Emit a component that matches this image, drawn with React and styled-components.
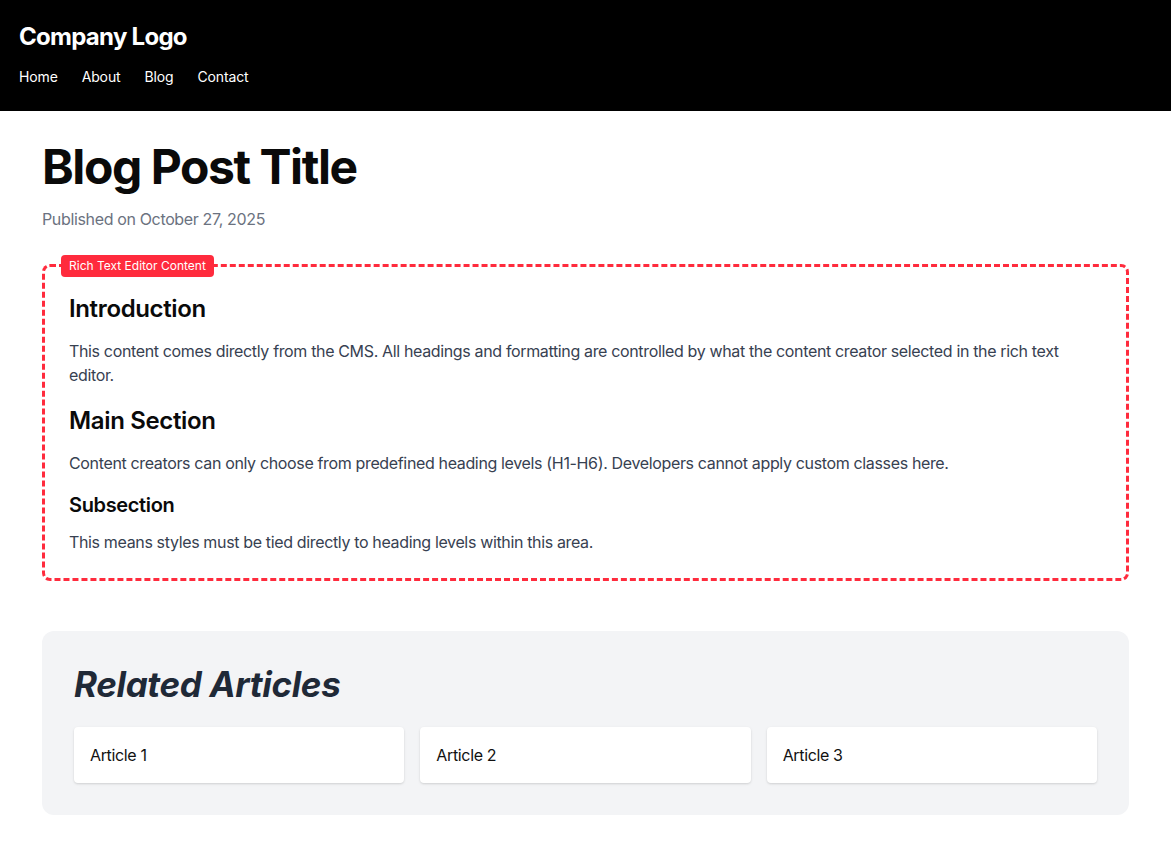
import styled, { createGlobalStyle } from 'styled-components';

const GlobalStyle = createGlobalStyle`
  * {
    box-sizing: border-box;
  }

  body {
    margin: 0;
    background: #fff;
    font-family: Inter, "Noto Sans", "Liberation Sans", sans-serif;
    letter-spacing: -0.022em;
    color: #111;
  }
`;

const accent = '#ff2b3d';

const Header = styled.header`
  background: #000;
  color: #fff;
  padding: 21px 19px 20px;
`;

const Logo = styled.div`
  font-size: 24px;
  line-height: 32px;
  font-weight: 700;
  letter-spacing: -0.03em;
  margin-bottom: 10px;
`;

const Nav = styled.nav`
  display: flex;
  gap: 24px;
`;

const NavLink = styled.a`
  color: #fff;
  font-size: 14px;
  line-height: 28px;
  letter-spacing: -0.01em;
  text-decoration: none;
`;

const Main = styled.main`
  padding: 27px 42px 40px;
`;

const Title = styled.h1`
  margin: 0;
  font-size: 48px;
  line-height: 58px;
  font-weight: 700;
  color: #0a0a0a;
  letter-spacing: -0.03em;
`;

const Meta = styled.p`
  margin: 11px 0 33px;
  font-size: 16px;
  line-height: 24px;
  color: #6b7280;
`;

const EditorBox = styled.section`
  position: relative;
  border: 3px dashed ${accent};
  border-radius: 8px;
  padding: 28px 24px 24px;
`;

const EditorLabel = styled.span`
  position: absolute;
  top: -12px;
  left: 16px;
  background: ${accent};
  color: #fff;
  font-size: 12px;
  line-height: 16px;
  letter-spacing: 0;
  padding: 3px 8px;
  border-radius: 4px;
`;

const Heading = styled.h2`
  margin: ${(p) => p.$top}px 0 ${(p) => p.$gap}px;
  font-size: ${(p) => p.$size}px;
  line-height: 1.2;
  font-weight: 600;
  color: #0a0a0a;
`;

const Paragraph = styled.p`
  margin: 0;
  font-size: 16px;
  line-height: 24px;
  color: #374151;
`;

const Related = styled.section`
  margin-top: 50px;
  background: #f3f4f6;
  border-radius: 12px;
  padding: 33px 32px 32px;
`;

const RelatedTitle = styled.h2`
  margin: 0 0 23px;
  font-size: 35px;
  line-height: 40px;
  font-weight: 700;
  font-style: italic;
  color: #1f2937;
`;

const CardGrid = styled.div`
  display: grid;
  grid-template-columns: repeat(3, 1fr);
  gap: 16px;
`;

const Card = styled.div`
  background: #fff;
  border-radius: 4px;
  box-shadow: 0 1px 3px rgba(0, 0, 0, 0.1), 0 1px 2px rgba(0, 0, 0, 0.06);
  padding: 16px;
  font-size: 16px;
  line-height: 24px;
  color: #111;
`;

const links = ['Home', 'About', 'Blog', 'Contact'];
const articles = ['Article 1', 'Article 2', 'Article 3'];

const App = () => (
  <>
    <GlobalStyle />
    <Header>
      <Logo>Company Logo</Logo>
      <Nav>
        {links.map((l) => (
          <NavLink key={l} href="#">{l}</NavLink>
        ))}
      </Nav>
    </Header>
    <Main>
      <Title>Blog Post Title</Title>
      <Meta>Published on October 27, 2025</Meta>
      <EditorBox>
        <EditorLabel>Rich Text Editor Content</EditorLabel>
        <Heading $top={0} $size={24} $gap={15}>Introduction</Heading>
        <Paragraph>
          This content comes directly from the CMS. All headings and formatting are controlled by what the content creator selected in the rich text editor.
        </Paragraph>
        <Heading $top={20} $size={24} $gap={15}>Main Section</Heading>
        <Paragraph>
          Content creators can only choose from predefined heading levels (H1-H6). Developers cannot apply custom classes here.
        </Paragraph>
        <Heading as="h3" $top={18} $size={20} $gap={13}>Subsection</Heading>
        <Paragraph>This means styles must be tied directly to heading levels within this area.</Paragraph>
      </EditorBox>
      <Related>
        <RelatedTitle>Related Articles</RelatedTitle>
        <CardGrid>
          {articles.map((a) => (
            <Card key={a}>{a}</Card>
          ))}
        </CardGrid>
      </Related>
    </Main>
  </>
);

export default App;
